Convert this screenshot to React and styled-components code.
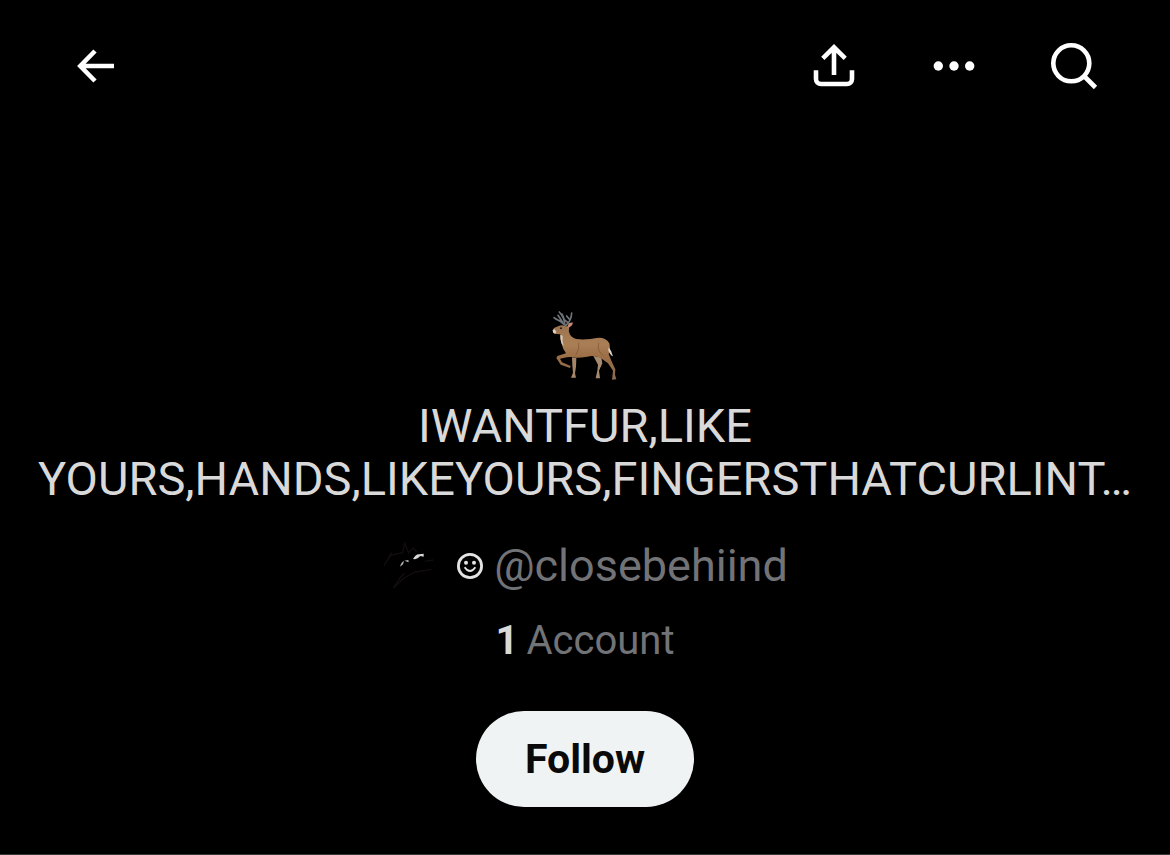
import React from "react";
import styled, { createGlobalStyle } from "styled-components";

const GlobalStyle = createGlobalStyle`
  * {
    box-sizing: border-box;
  }

  body {
    margin: 0;
    background: #000;
    color: #d9d9d9;
    font-family: Roboto, "Liberation Sans", sans-serif;
  }
`;

const Page = styled.div`
  display: flex;
  flex-direction: column;
  min-height: 100vh;
  border-bottom: 1px solid #3a3739;
`;

const Toolbar = styled.header`
  display: flex;
  align-items: center;
  justify-content: space-between;
  padding: 42px 72px;
`;

const ToolbarActions = styled.div`
  display: flex;
  gap: 72px;
`;

const IconButton = styled.button`
  display: flex;
  padding: 0;
  border: 0;
  background: none;
  color: #fff;
  cursor: pointer;
`;

const Icon = styled.svg.attrs({ viewBox: "0 0 48 48", "aria-hidden": true })`
  width: 48px;
  height: 48px;
  fill: none;
  stroke: currentColor;
  stroke-width: 4.6;
`;

const Profile = styled.main`
  display: flex;
  flex-direction: column;
  align-items: center;
  padding: 178px 24px 47px;
`;

const DeerPicture = styled.svg`
  width: 72px;
  height: 72px;
`;

const Title = styled.h1`
  margin: 17px 0 32px;
  font-size: 47px;
  font-weight: 400;
  line-height: 53px;
  text-align: center;
`;

const Owner = styled.a`
  display: flex;
  align-items: center;
  color: #727377;
  font-size: 45px;
  line-height: 58px;
  text-decoration: none;
`;

const Avatar = styled.svg`
  width: 54px;
  height: 48px;
  margin-right: 20px;
`;

const Smiley = styled.svg`
  width: 28px;
  height: 28px;
  margin-right: 10px;
`;

const Count = styled.p`
  display: flex;
  gap: 8px;
  margin: 20px 0 44px;
  color: #727377;
  font-size: 40px;
  line-height: 52px;
`;

const CountNumber = styled.strong`
  color: #d9d9d9;
  font-weight: 700;
`;

const FollowButton = styled.button`
  height: 96px;
  padding: 0 49px;
  border: 0;
  border-radius: 48px;
  background: #eff3f4;
  color: #0a0a0a;
  font: 700 41px/48px Roboto, "Liberation Sans", sans-serif;
  cursor: pointer;
`;

function Deer() {
  return (
    <DeerPicture viewBox="57 30 216 216" role="img" aria-label="Deer">
      <defs>
        <linearGradient id="coat" x1="0" y1="0" x2="0" y2="1">
          <stop offset="0" stopColor="#9a7350" />
          <stop offset="0.35" stopColor="#ab7f55" />
          <stop offset="0.6" stopColor="#9a6d45" />
          <stop offset="1" stopColor="#8a6a50" />
        </linearGradient>
      </defs>
      <path d="M126 172 L139 174 L138 200 L135 220 L138 233 L123 233 L129 218 L127 196 Z" fill="#a78568" />
      <path d="M190 168 L214 172 L217 190 L207 212 L210 235 L197 235 L202 212 L204 194 Z" fill="#a58a70" />
      <path
        d="M68 92 L72 84 L86 78 Q96 74 105 78 L118 80 Q114 92 120 104 Q128 116 148 118 Q180 119 200 114 Q226 110 238 130 Q242 148 236 162 L244 182 L256 208 L255 224 L259 238 L246 239 L249 212 L234 190 L212 174 Q192 164 172 170 Q150 174 138 173 Q122 170 111 172 L90 176 L96 187 L122 198 L120 204 L92 194 L79 174 L82 168 L108 160 Q98 146 95 132 Q90 118 91 103 L78 102 Q68 99 68 92 Z"
        fill="url(#coat)"
      />
      <path d="M68 91 L73 87 L79 95 L76 101 L70 99 Z" fill="#ddd1c3" />
      <path d="M91 104 L98 107 Q96 124 101 139 Q90 128 91 104 Z" fill="#d8cbbb" />
      <path d="M236 142 Q245 153 249 169 Q239 165 235 151 Z" fill="#ded6cc" />
      <path d="M111 84 L116 70 L128 67 Q130 80 111 84 Z" fill="#c98772" />
      <circle cx="93" cy="85" r="3" fill="#24170f" />
      <path
        d="M106 76 Q94 64 72 53 M98 66 L78 58 M96 64 L84 46 M104 72 Q104 54 88 36 M102 56 L96 42 M108 76 Q124 62 125 39 M120 60 L110 48 M114 68 L104 60"
        fill="none"
        stroke="#6f7478"
        strokeWidth="5"
        strokeLinecap="round"
      />
      <path d="M146 128 Q150 148 138 164 M206 128 Q200 154 220 166" fill="none" stroke="#76502f" strokeWidth="3" opacity="0.6" />
    </DeerPicture>
  );
}

function OwnerAvatar() {
  return (
    <Avatar viewBox="30 30 162 144" aria-hidden="true">
      <path
        d="M36 100 L56 70 L92 62 L98 34 L110 62 L124 48 L134 60 M60 62 L48 78 M184 84 L158 88 M178 112 L130 120 L96 138 L64 168 L84 138 L98 124"
        fill="none"
        stroke="#130d0f"
        strokeWidth="4"
      />
      <path d="M84 104 Q88 90 96 87 L93 97 Z M97 86 L109 84 L110 91 Z" fill="#b9bcbb" />
      <path d="M123 81 Q132 65 142 67 L155 65 L155 74 L145 72 L137 79 L129 82 Z" fill="#d5d8d6" />
    </Avatar>
  );
}

export default function App() {
  return (
    <>
      <GlobalStyle />
      <Page>
        <Toolbar>
          <IconButton type="button" aria-label="Back">
            <Icon>
              <path d="M23 9 L8.3 24 L23 39 M8 24 H42" />
            </Icon>
          </IconButton>
          <ToolbarActions>
            <IconButton type="button" aria-label="Share">
              <Icon>
                <path d="M12.8 16.3 L24 5.3 L35.2 16.3 M24 5 V33" />
                <path d="M6 28.3 V37 a5 5 0 0 0 5 5 H37 a5 5 0 0 0 5 -5 V28.3" />
              </Icon>
            </IconButton>
            <IconButton type="button" aria-label="More">
              <Icon>
                <g fill="currentColor" stroke="none">
                  <circle cx="8.3" cy="24" r="4.7" />
                  <circle cx="24" cy="24" r="4.7" />
                  <circle cx="39.7" cy="24" r="4.7" />
                </g>
              </Icon>
            </IconButton>
            <IconButton type="button" aria-label="Search">
              <Icon>
                <circle cx="21.3" cy="21.3" r="18" />
                <path d="M34 34 L45.5 45.5" />
              </Icon>
            </IconButton>
          </ToolbarActions>
        </Toolbar>
        <Profile>
          <Deer />
          <Title>IWANTFUR,LIKE YOURS,HANDS,LIKEYOURS,FINGERSTHATCURLINT…</Title>
          <Owner href="#closebehiind">
            <OwnerAvatar />
            <Smiley viewBox="0 0 28 28" aria-hidden="true">
              <circle cx="14" cy="14" r="11.6" fill="none" stroke="#e4e4e4" strokeWidth="2.8" />
              <circle cx="10" cy="10.8" r="2" fill="#e4e4e4" />
              <circle cx="18" cy="10.8" r="2" fill="#e4e4e4" />
              <path d="M8.6 15.2 Q14 22.8 19.4 15.2" fill="none" stroke="#e4e4e4" strokeWidth="1.9" />
            </Smiley>
            @closebehiind
          </Owner>
          <Count>
            <CountNumber>1</CountNumber> Account
          </Count>
          <FollowButton type="button">Follow</FollowButton>
        </Profile>
      </Page>
    </>
  );
}
